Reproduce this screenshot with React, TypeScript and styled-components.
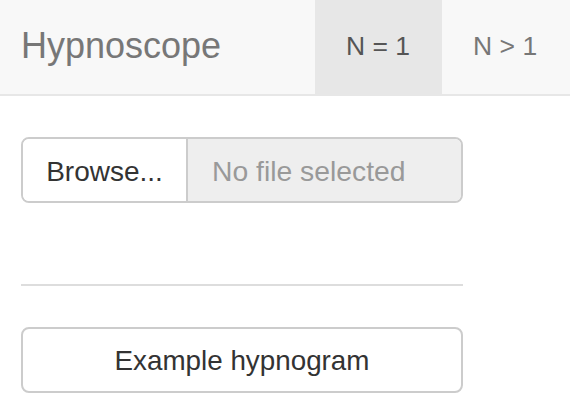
import React from "react";
import styled, { createGlobalStyle } from "styled-components";

const Global = createGlobalStyle`
  html, body { margin: 0; padding: 0; background: #fff; }
  body { font-family: "Liberation Sans", Arial, Helvetica, sans-serif; color: #333; }
  * { box-sizing: border-box; }
`;

const Navbar = styled.nav`
  display: flex;
  align-items: stretch;
  height: 96px;
  background: #f8f8f8;
  border-bottom: 2px solid #e7e7e7;
`;

const Brand = styled.div`
  display: flex;
  align-items: center;
  padding: 0 0 2px 21px;
  width: 315px;
  font-size: 36px;
  color: #777;
`;

const Tab = styled.div<{ $active?: boolean }>`
  display: flex;
  align-items: center;
  padding: 0 32px 2px 31px;
  font-size: 26.5px;
  color: ${(p) => (p.$active ? "#555" : "#777")};
  background: ${(p) => (p.$active ? "#e7e7e7" : "transparent")};
`;

const Content = styled.main`
  display: flex;
  flex-direction: column;
  width: 442px;
  margin-left: 21px;
  padding-top: 41px;
`;

const InputGroup = styled.div`
  display: flex;
  height: 66px;
  border: 2px solid #ccc;
  border-radius: 8px;
  overflow: hidden;
`;

const BrowseButton = styled.div`
  display: flex;
  align-items: center;
  justify-content: center;
  width: 165px;
  padding-top: 3px;
  background: #fff;
  border-right: 2px solid #ccc;
  font-size: 28px;
  color: #333;
`;

const FileField = styled.div`
  flex: 1;
  display: flex;
  align-items: center;
  padding: 3px 0 0 24px;
  background: #eee;
  font-size: 28.3px;
  color: #999;
`;

const Rule = styled.hr`
  margin: 81px 0 41px;
  border: 0;
  border-top: 2px solid #ddd;
  height: 0;
`;

const Button = styled.div`
  display: flex;
  align-items: center;
  justify-content: center;
  height: 66px;
  padding-top: 2px;
  border: 2px solid #ccc;
  border-radius: 8px;
  background: #fff;
  font-size: 27.8px;
  color: #333;
`;

export default function App() {
  return (
    <>
      <Global />
      <Navbar>
        <Brand>Hypnoscope</Brand>
        <Tab $active>N = 1</Tab>
        <Tab>N &gt; 1</Tab>
      </Navbar>
      <Content>
        <InputGroup>
          <BrowseButton>Browse...</BrowseButton>
          <FileField>No file selected</FileField>
        </InputGroup>
        <Rule />
        <Button>Example hypnogram</Button>
      </Content>
    </>
  );
}
